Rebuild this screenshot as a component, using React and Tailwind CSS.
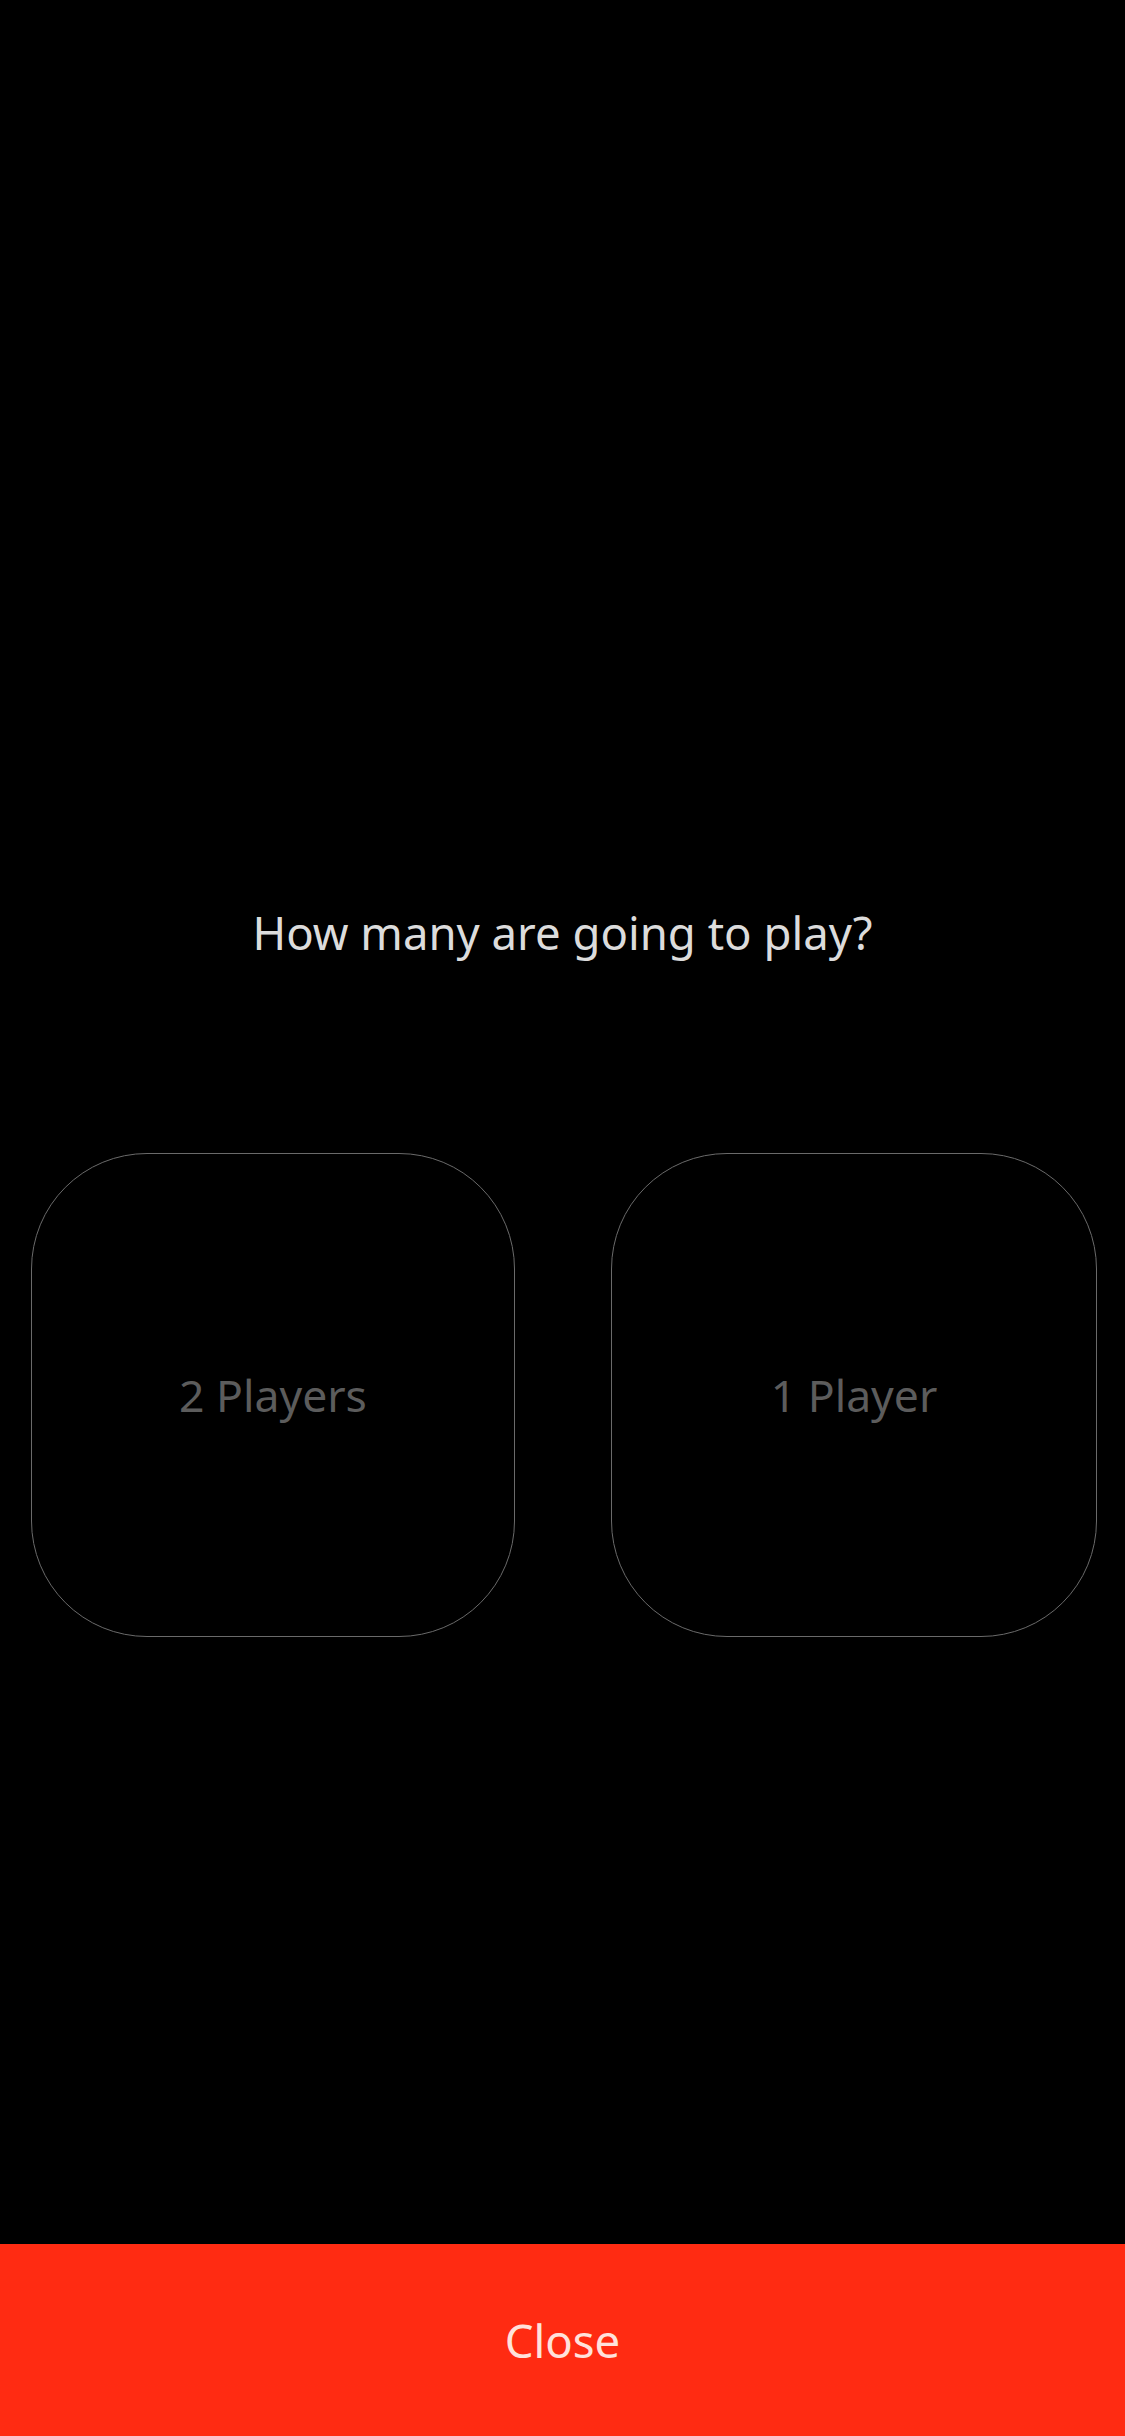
export default function App() {
  return (
    <div className="flex h-[2436px] w-[1125px] flex-col bg-black" style={{ fontFamily: '"Noto Sans", "Open Sans", sans-serif' }}>
      <div className="pt-[903px] text-center text-[45.5px] leading-[58px] text-[#dcdcdc]">
        How many are going to play?
      </div>
      <div className="mt-[192px] flex justify-between pl-[31px] pr-[28px]">
        <button className="flex h-[484px] w-[484px] items-center justify-center rounded-[116px] border-[1.5px] border-[#6a6a6a] text-[44.5px] text-[#5c5c5c]">
          2 Players
        </button>
        <button className="flex h-[484px] w-[486px] items-center justify-center rounded-[116px] border-[1.5px] border-[#6a6a6a] text-[44.5px] text-[#5c5c5c]">
          1 Player
        </button>
      </div>
      <div className="flex-1" />
      <button className="flex h-[192px] w-full items-center justify-center bg-[#ff2b12] text-[45.5px] text-[#ffe2dc]">
        Close
      </button>
    </div>
  );
}
